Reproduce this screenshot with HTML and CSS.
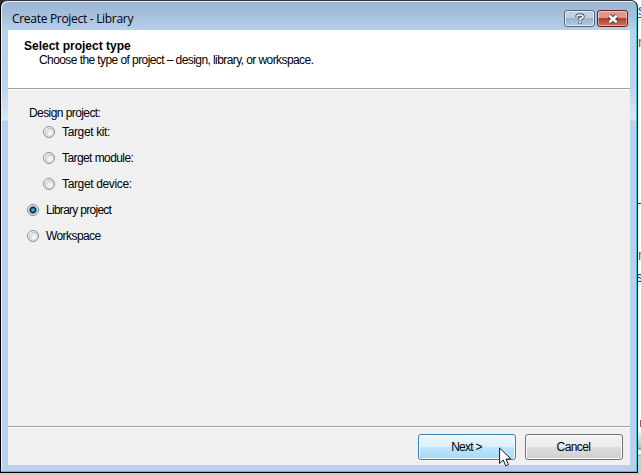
FILE: index.html
```html
<!DOCTYPE html>
<html lang="en">
<head>
<meta charset="utf-8">
<title>Create Project - Library</title>
<link rel="stylesheet" href="styles.css">
</head>
<body>
<div class="behind">
  <span class="scrap blue">s</span>
  <span class="scrap rust">n</span>
  <span class="scrap rule"></span>
  <span class="scrap rust low">n</span>
  <span class="scrap navy">s</span>
  <span class="scrap dot"></span>
  <span class="scrap bar"></span>
</div>
<main class="window">
  <header class="titlebar">
    <h1 class="caption">Create Project - Library</h1>
    <button class="sys help" aria-label="Help">
      <svg width="12" height="12" viewBox="0 0 12 12"><path d="M3 4.2V3.6Q3 2 6 2T9 3.7Q9 5 6 6V7.6M6 8.9V11" fill="none" stroke="#4b5362" stroke-width="3.4"/><path d="M3 3.8V3.6Q3 2 6 2T9 3.7Q9 5 6 6V7.2M6 9.1V10.6" fill="none" stroke="#fff" stroke-width="1.6"/></svg>
    </button>
    <button class="sys close" aria-label="Close">
      <svg width="12" height="10" viewBox="0 0 12 10"><path d="M2.4 1.8L9.6 8.2M9.6 1.8L2.4 8.2" stroke="#533b43" stroke-width="4.6"/><path d="M2.4 1.8L9.6 8.2M9.6 1.8L2.4 8.2" stroke="#fff" stroke-width="2.5"/></svg>
    </button>
  </header>
  <div class="client">
    <section class="banner">
      <h2>Select project type</h2>
      <p>Choose the type of project – design, library, or workspace.</p>
    </section>
    <section class="options">
      <div class="group">Design project:</div>
      <label class="choice nested"><i class="radio"></i><span class="loose">Target kit:</span></label>
      <label class="choice nested"><i class="radio"></i><span>Target module:</span></label>
      <label class="choice nested"><i class="radio"></i><span class="loose">Target device:</span></label>
      <label class="choice"><i class="radio on"></i><span class="tight">Library project</span></label>
      <label class="choice"><i class="radio"></i><span>Workspace</span></label>
    </section>
    <footer class="actions">
      <button class="btn next"><span class="tight">Next &gt;</span></button>
      <button class="btn"><span>Cancel</span></button>
    </footer>
  </div>
</main>
<svg class="cursor" width="13" height="20" viewBox="0 0 13 20"><path d="M.6 1V16.5L4.2 13L6.7 18.8L9.5 17.6L7 12H12Z" fill="#fff" stroke="#15182a" stroke-width="1"/></svg>
</body>
</html>
```
FILE: styles.css
```css
* { box-sizing: border-box; }
body {
  margin: 0;
  width: 641px;
  height: 475px;
  overflow: hidden;
  position: relative;
  background: #fff;
  font: 12px/14px "Liberation Sans", sans-serif;
  letter-spacing: -.58px;
  color: #000;
}
h1, h2, p { margin: 0; font-weight: 400; font-size: inherit; }
.loose { letter-spacing: -.36px; }
.tight { letter-spacing: -.72px; }
.behind {
  position: absolute;
  inset: 0;
  background: linear-gradient(#2c2c34 0 30px, transparent 30px) 0 0 / 20px 100% no-repeat,
    linear-gradient(#ccc, #ccc) 0 473px / 100% 2px no-repeat, #fff;
}
.scrap { position: absolute; left: 638px; width: 3px; overflow: hidden; font: 14px/14px "Liberation Sans", sans-serif; }
.blue { top: 3px; color: #1749a0; border-bottom: 1px solid #1749a0; }
.rust { top: 35px; color: #a84e13; }
.low { top: 248px; }
.navy { top: 270px; left: 636px; width: 5px; color: #17305c; }
.rule { top: 203px; height: 1px; background: #203b78; }
.dot { top: 420px; left: 640px; width: 1px; height: 7px; background: #a05068; }
.bar { top: 432px; height: 43px; background: linear-gradient(#eee, #bbb 16px, #777 17px, #eee 18px, #fff 22px, #999 23px, #ccc 24px); }
.window {
  position: relative;
  width: 638px;
  height: 473px;
  padding: 0 6px 6px 7px;
  border: 1px solid #000;
  border-top-color: #303640;
  border-radius: 7px 7px 0 0;
  background: linear-gradient(#9ab4d2, #a6bfdb 14px, #b9d1ea 30px, #bcd3eb 85px, #dae7f4 119px, #b9d1ea 120px);
  box-shadow: inset -1px -1px #35c9e8, inset 1px 1px #e9f3fc;
}
.titlebar { display: flex; align-items: flex-start; height: 29px; padding: 9px 3px 0 4px; }
.caption { flex: 1; padding-top: 1px; font: 12px/16px "Open Sans", sans-serif; letter-spacing: -.3px; white-space: nowrap; }
.sys {
  display: grid;
  place-items: center;
  width: 31px;
  height: 17px;
  padding: 0;
  border: 1px solid #56677e;
  border-radius: 3px;
  box-shadow: inset 0 0 0 1px #ffffff90;
}
.help { margin-right: 2px; background: linear-gradient(#c1d1e3 50%, #9db3cc 50%, #b5cbe2); }
.close { border-color: #5b2323; background: linear-gradient(#dc9a8d 45%, #b83b25 50%, #cf7159); box-shadow: inset 0 0 0 1px #ffffff70; }
.client { display: flex; flex-direction: column; width: 622px; height: 435px; background: #f0f0f0; }
.banner { height: 59px; margin-bottom: 1px; padding: 9px 0 0 16px; background: #fff; border-bottom: 1px solid #a0a0a0; box-shadow: 0 1px #fff; }
h2 { font-weight: 700; letter-spacing: 0; }
.banner p { padding-left: 15px; }
.options { flex: 1; padding: 16px 0 0 19px; }
.group { height: 13px; padding-left: 2px; line-height: 14px; }
.choice { display: flex; align-items: center; gap: 7px; height: 26px; }
.nested { padding-left: 16px; }
.radio { width: 12px; height: 12px; border: 1px solid #8e8f8f; border-radius: 50%; background: radial-gradient(circle at 60% 60%, #f8f8f8 10%, #d6d9dc 50%, #c2c6ca 56%, #f4f4f4 62%); }
.on { border-color: #7b8b96; background: radial-gradient(circle at 5px 5px, #8fdcf8 0, #288dc0 1.2px, #0b3757 2.6px, #173b55 3.2px, #e6eef3 4.1px); }
.actions { display: flex; justify-content: flex-end; gap: 9px; height: 39px; padding: 7px 7px 0 0; border-top: 1px solid #a0a0a0; box-shadow: inset 0 1px #fff; }
.btn { width: 98px; height: 26px; padding: 0 1px 0 0; font: inherit; letter-spacing: inherit; border: 1px solid #707070; border-radius: 3px; background: linear-gradient(#f3f3f3, #ebebeb 50%, #ddd 50%, #cfcfcf); box-shadow: inset 0 0 0 1px #fcfcfc; }
.next { border-color: #3c7fb1; background: linear-gradient(#eaf6fd, #d9f0fc 50%, #bee6fd 50%, #a7d9f5); box-shadow: inset 0 0 0 1px #f2fbff; }
.cursor { position: absolute; left: 499px; top: 447px; }
```
